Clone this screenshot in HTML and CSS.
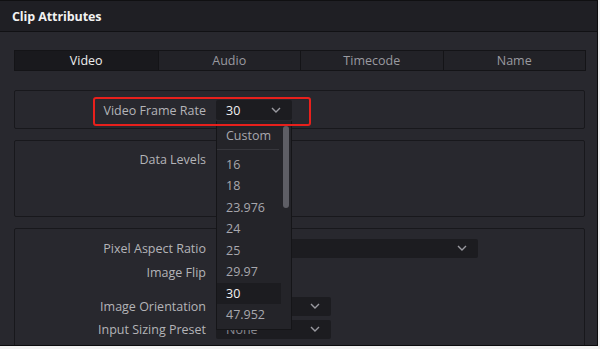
FILE: index.html
```html
<!DOCTYPE html>
<html>
<head>
<meta charset="utf-8">
<link rel="stylesheet" href="styles.css">
</head>
<body>
<div class="app">
  <div class="titlebar">Clip Attributes</div>
  <div class="content">
    <div class="tabs">
      <div class="tab active">Video</div>
      <div class="tab">Audio</div>
      <div class="tab">Timecode</div>
      <div class="tab">Name</div>
    </div>

    <div class="section s1">
      <div class="row">
        <div class="label">Video Frame Rate</div>
        <div class="select-wrap">
          <div class="select fr"><span class="val">30</span><svg class="chev" width="10" height="6" viewBox="0 0 10 6"><path d="M1 1 L5 5 L9 1" fill="none" stroke="#9a9aa0" stroke-width="1.4"/></svg></div>
          <div class="menu">
            <div class="item">Custom</div>
            <div class="sep"></div>
            <div class="item">16</div>
            <div class="item">18</div>
            <div class="item">23.976</div>
            <div class="item">24</div>
            <div class="item">25</div>
            <div class="item">29.97</div>
            <div class="item sel">30</div>
            <div class="item">47.952</div>
            <div class="scroll"></div>
          </div>
        </div>
      </div>
      <div class="highlight"></div>
    </div>

    <div class="section s2">
      <div class="row">
        <div class="label">Data Levels</div>
      </div>
    </div>

    <div class="section s3">
      <div class="row r-par">
        <div class="label">Pixel Aspect Ratio</div>
        <div class="select wide"><span class="val"></span><svg class="chev" width="10" height="6" viewBox="0 0 10 6"><path d="M1 1 L5 5 L9 1" fill="none" stroke="#9a9aa0" stroke-width="1.4"/></svg></div>
      </div>
      <div class="row r-flip">
        <div class="label">Image Flip</div>
      </div>
      <div class="row r-orient">
        <div class="label">Image Orientation</div>
        <div class="select mid"><span class="val"></span><svg class="chev" width="10" height="6" viewBox="0 0 10 6"><path d="M1 1 L5 5 L9 1" fill="none" stroke="#9a9aa0" stroke-width="1.4"/></svg></div>
      </div>
      <div class="row r-preset">
        <div class="label">Input Sizing Preset</div>
        <div class="select mid"><span class="val dim">None</span><svg class="chev" width="10" height="6" viewBox="0 0 10 6"><path d="M1 1 L5 5 L9 1" fill="none" stroke="#9a9aa0" stroke-width="1.4"/></svg></div>
      </div>
    </div>
  </div>
</div>
</body>
</html>
```

FILE: styles.css
```css
* { box-sizing: border-box; }
html, body { margin: 0; padding: 0; background: #f2f2f2; }
body { font-family: "Open Sans", "Noto Sans", sans-serif; }

.app {
  width: 598px;
  height: 346px;
  background: #28282e;
  border-right: 1px solid #0c0c0e;
  border-bottom: 1px solid #0c0c0e;
  border-top: 1px solid #101012;
  overflow: hidden;
}

.titlebar {
  height: 31px;
  background: #1f1f24;
  border-bottom: 1px solid #111114;
  color: #f2f2f2;
  font-weight: 700;
  font-size: 12.5px;
  padding-left: 12px;
  padding-top: 1px;
  display: flex;
  align-items: center;
  letter-spacing: -0.1px;
}

.content {
  padding: 18px 11px 0 14px;
}

.tabs {
  display: grid;
  grid-template-columns: repeat(4, 1fr);
  height: 21px;
  border: 1px solid #141417;
  background: #222227;
  margin-bottom: 19px;
}
.tab {
  display: flex;
  align-items: center;
  justify-content: center;
  font-size: 12.5px;
  color: #9a9aa0;
  border-left: 1px solid #141417;
}
.tab:first-child { border-left: none; }
.tab.active { background: #19191d; color: #ededed; }

.section {
  border: 1px solid #18181c;
  border-radius: 2px;
  background: #28282e;
  margin-bottom: 11px;
  margin-right: 1px;
  position: relative;
}
.s1 { height: 39px; padding-top: 9px; }
.s2 { height: 77px; padding-top: 8px; }
.s3 { height: 140px; padding-top: 9px; }

.row {
  display: grid;
  grid-template-columns: 191px auto;
  column-gap: 10px;
  align-items: center;
  height: 20px;
}
.label {
  text-align: right;
  font-size: 12.5px;
  color: #b4b4b8;
  white-space: nowrap;
}

.r-flip { margin-top: 4px; }
.r-orient { margin-top: 14px; }
.r-preset { margin-top: 3px; }

.select {
  height: 19px;
  background: #1c1c20;
  border-radius: 2px;
  display: flex;
  align-items: center;
  justify-content: space-between;
  padding: 0 10px 0 10px;
  font-size: 12.5px;
  color: #f2f2f2;
}
.select.fr { width: 76px; height: 20px; }
.select.wide { width: 262px; }
.select.mid { width: 115px; }
.val.dim { color: #8a8a90; }
.chev { display: block; margin-right: 1px; }

.select-wrap { position: relative; width: 76px; }

.menu {
  position: absolute;
  left: 0;
  top: 21px;
  width: 76px;
  height: 209px;
  background: #242429;
  border: 1px solid #151518;
  border-top: none;
  padding: 4px 0 0 0;
  z-index: 5;
}
.item {
  height: 21.5px;
  line-height: 21.5px;
  padding-left: 9px;
  margin-right: 10px;
  font-size: 12.5px;
  color: #a8a8ae;
}
.item.sel { background: #1c1c20; color: #f4f4f4; }
.sep {
  height: 1px;
  background: #37373d;
  margin: 2px 12px 4px 0;
}
.scroll {
  position: absolute;
  right: 2px;
  top: 5px;
  width: 6px;
  height: 82px;
  border-radius: 3px;
  background: #5e5e65;
}

.highlight {
  position: absolute;
  left: 78px;
  top: 6px;
  width: 218px;
  height: 29px;
  border: 2.5px solid #e8201c;
  border-radius: 3px;
  pointer-events: none;
  z-index: 6;
}
```
